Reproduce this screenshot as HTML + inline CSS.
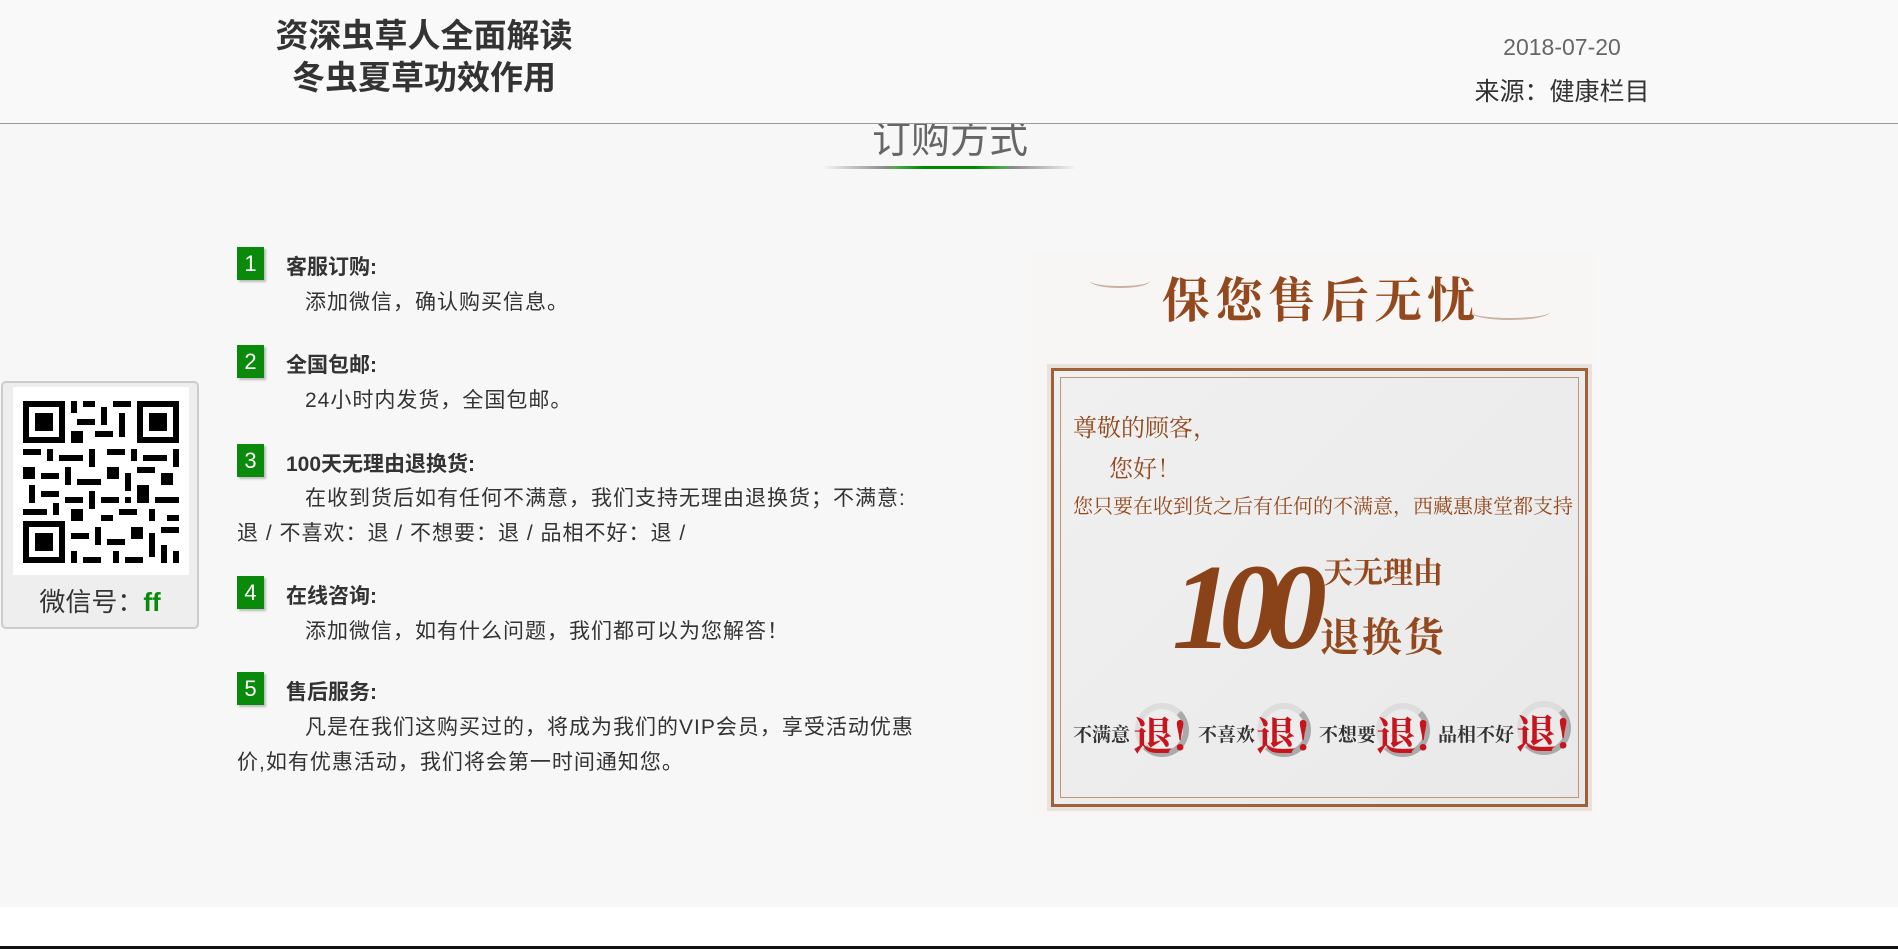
<!DOCTYPE html>
<html><head><meta charset="utf-8"><style>
*{margin:0;padding:0;box-sizing:border-box}
body{width:1898px;height:949px;background:#fff;font-family:"Liberation Sans","Noto Sans CJK SC",sans-serif;position:relative;overflow:hidden;color:#333}
.hdr{position:absolute;left:0;top:0;width:1898px;height:124px;background:#f9f9f9;border-bottom:1px solid #999;z-index:2;overflow:hidden}
.main{position:absolute;left:0;top:124px;width:1898px;height:783px;background:#f7f7f7;overflow:hidden}
.t{position:absolute;left:174px;width:500px;text-align:center;font-weight:bold;font-size:33px;color:#333;line-height:42px}
.abs{position:absolute;white-space:nowrap}
.badge{position:absolute;left:237px;width:27px;height:33px;background:#0a8a0a;color:#fff;font-size:22px;text-align:center;line-height:33px;box-shadow:2px 2px 2px #bbb}
.it{position:absolute;left:286px;font-weight:bold;font-size:21px;color:#333}
.ds{position:absolute;left:237px;width:684px;font-size:21px;letter-spacing:1px;line-height:35px;text-indent:68px;color:#333}
.br{color:#93491d;font-family:"Noto Serif CJK SC","WenQuanYi Zen Hei",serif}
.tui{position:absolute;font-size:40px;color:#c8141c;font-family:"Noto Serif CJK SC",serif;font-weight:bold}
.circ{position:absolute;width:54px;height:54px;border-radius:50%;border:6px solid #aaa;border-left-color:#ddd;border-top-color:#ddd}
.sm{position:absolute;font-size:19px;color:#333;font-family:'Noto Serif CJK SC',serif;font-weight:bold}
</style></head><body>
<div class="hdr">
 <div class="t" style="top:15px">资深虫草人全面解读</div>
 <div class="t" style="top:57px">冬虫夏草功效作用</div>
 <div class="abs" style="left:1462px;width:200px;text-align:center;top:34px;font-size:23px;color:#666">2018-07-20</div>
 <div class="abs" style="left:1462px;width:200px;text-align:center;top:72px;font-size:25px;color:#333">来源：健康栏目</div>
</div>
<div class="main">
 <div class="abs" style="left:800px;width:300px;text-align:center;top:-15px;font-size:39px;color:#666">订购方式</div>
 <div class="abs" style="left:824px;top:42px;width:251px;height:3px;background:linear-gradient(90deg,#f4f4f4,#888 25%,#5a5 28%,#080 40%,#080 60%,#5a5 72%,#888 75%,#f4f4f4)"></div>

 <div class="abs" style="left:1px;top:257px;width:198px;height:248px;background:#eee;border:2px solid #ccc;border-radius:5px"></div>
 <svg class="abs" style="left:13px;top:263px" width="176" height="188" viewBox="0 0 176 188">
  <rect width="176" height="188" fill="#fff"/>
  <g fill="#000">
   <rect x="10" y="14" width="42" height="42"/><rect x="124" y="14" width="42" height="42"/><rect x="10" y="134" width="42" height="42"/>
  </g>
  <g fill="#fff"><rect x="16" y="20" width="30" height="30"/><rect x="130" y="20" width="30" height="30"/><rect x="16" y="140" width="30" height="30"/></g>
  <g fill="#000"><rect x="22" y="26" width="18" height="18"/><rect x="136" y="26" width="18" height="18"/><rect x="22" y="146" width="18" height="18"/>
   <rect x="58" y="14" width="6" height="12"/><rect x="70" y="14" width="12" height="6"/><rect x="88" y="20" width="6" height="18"/><rect x="100" y="14" width="18" height="6"/><rect x="64" y="32" width="18" height="6"/><rect x="106" y="26" width="6" height="24"/><rect x="58" y="44" width="12" height="12"/><rect x="82" y="44" width="18" height="6"/>
   <rect x="10" y="62" width="18" height="6"/><rect x="34" y="62" width="6" height="12"/><rect x="46" y="68" width="24" height="6"/><rect x="76" y="62" width="6" height="18"/><rect x="94" y="62" width="18" height="6"/><rect x="118" y="62" width="6" height="12"/><rect x="130" y="68" width="24" height="6"/><rect x="160" y="62" width="6" height="18"/>
   <rect x="10" y="80" width="12" height="12"/><rect x="28" y="86" width="18" height="6"/><rect x="52" y="80" width="6" height="18"/><rect x="64" y="92" width="24" height="6"/><rect x="94" y="80" width="12" height="12"/><rect x="112" y="86" width="6" height="18"/><rect x="124" y="80" width="18" height="6"/><rect x="148" y="86" width="12" height="12"/>
   <rect x="16" y="98" width="6" height="18"/><rect x="28" y="104" width="18" height="6"/><rect x="52" y="110" width="18" height="6"/><rect x="76" y="104" width="6" height="18"/><rect x="88" y="110" width="18" height="6"/><rect x="112" y="110" width="6" height="6"/><rect x="124" y="98" width="12" height="18"/><rect x="142" y="110" width="24" height="6"/>
   <rect x="10" y="122" width="24" height="6"/><rect x="40" y="116" width="6" height="12"/><rect x="58" y="122" width="12" height="12"/><rect x="88" y="128" width="12" height="6"/><rect x="106" y="122" width="18" height="6"/><rect x="136" y="122" width="6" height="12"/><rect x="154" y="128" width="12" height="6"/>
   <rect x="58" y="146" width="18" height="6"/><rect x="82" y="140" width="6" height="18"/><rect x="94" y="152" width="18" height="6"/><rect x="118" y="140" width="12" height="12"/><rect x="136" y="146" width="6" height="24"/><rect x="148" y="140" width="18" height="6"/>
   <rect x="58" y="164" width="6" height="12"/><rect x="70" y="170" width="18" height="6"/><rect x="100" y="164" width="6" height="12"/><rect x="112" y="170" width="18" height="6"/><rect x="148" y="158" width="6" height="18"/><rect x="160" y="164" width="6" height="12"/>
  </g>
 </svg>
 <div class="abs" style="left:1px;width:198px;text-align:center;top:458px;font-size:26px;color:#333">微信号：<b style="color:#0a8a0a">ff</b></div>

 <div class="badge" style="top:123px">1</div><div class="it" style="top:127px">客服订购:</div>
 <div class="ds" style="top:161px">添加微信，确认购买信息。</div>
 <div class="badge" style="top:221px">2</div><div class="it" style="top:225px">全国包邮:</div>
 <div class="ds" style="top:259px">24小时内发货，全国包邮。</div>
 <div class="badge" style="top:320px">3</div><div class="it" style="top:324px">100天无理由退换货:</div>
 <div class="ds" style="top:357px">在收到货后如有任何不满意，我们支持无理由退换货；不满意:退 / 不喜欢：退 / 不想要：退 / 品相不好：退 /</div>
 <div class="badge" style="top:452px">4</div><div class="it" style="top:456px">在线咨询:</div>
 <div class="ds" style="top:490px">添加微信，如有什么问题，我们都可以为您解答！</div>
 <div class="badge" style="top:548px">5</div><div class="it" style="top:552px">售后服务:</div>
 <div class="ds" style="top:586px">凡是在我们这购买过的，将成为我们的VIP会员，享受活动优惠价,如有优惠活动，我们将会第一时间通知您。</div>

 <div class="abs" style="left:1032px;top:126px;width:563px;height:567px;background:#f8f6f4"></div>
 <div class="abs br" style="left:1162px;top:138px;font-size:48px;letter-spacing:5px;font-weight:bold">保您售后无忧</div>
 <div class="abs" style="left:1090px;top:150px;width:60px;height:14px;border-bottom:2px solid #c9b0a0;border-radius:50%"></div>
 <div class="abs" style="left:1470px;top:180px;width:80px;height:16px;border-bottom:2px solid #c9b0a0;border-radius:50%"></div>
 <div class="abs" style="left:1051px;top:244px;width:537px;height:439px;background:linear-gradient(135deg,#f0f0f0,#e9e9e9);border:3px solid #a0603a;outline:4px solid #e8e2dc"></div>
 <div class="abs" style="left:1060px;top:253px;width:519px;height:421px;border:1px solid #c0967a"></div>
 <div class="abs br" style="left:1073px;top:284px;font-size:24px">尊敬的顾客，</div>
 <div class="abs br" style="left:1109px;top:325px;font-size:24px">您好！</div>
 <div class="abs br" style="left:1073px;top:366px;font-size:20px">您只要在收到货之后有任何的不满意，西藏惠康堂都支持</div>
 <div class="abs" style="left:1172px;top:414px;font-size:122px;font-weight:bold;font-style:italic;color:#8a4218;font-family:'Liberation Serif',serif;letter-spacing:-14px;line-height:140px">100</div>
 <div class="abs br" style="left:1323px;top:424px;font-size:30px;font-weight:bold">天无理由</div>
 <div class="abs br" style="left:1320px;top:482px;font-size:40px;font-weight:bold;letter-spacing:2px">退换货</div>
 <div class="circ" style="left:1135px;top:579px"></div>
 <div class="circ" style="left:1257px;top:579px"></div>
 <div class="circ" style="left:1376px;top:579px"></div>
 <div class="circ" style="left:1517px;top:577px"></div>
 <div class="sm" style="left:1073px;top:596px">不满意</div>
 <div class="tui" style="left:1133px;top:581px">退!</div>
 <div class="sm" style="left:1198px;top:596px">不喜欢</div>
 <div class="tui" style="left:1256px;top:581px">退!</div>
 <div class="sm" style="left:1319px;top:596px">不想要</div>
 <div class="tui" style="left:1376px;top:581px">退!</div>
 <div class="sm" style="left:1438px;top:596px">品相不好</div>
 <div class="tui" style="left:1516px;top:579px">退!</div>
</div>
<div class="abs" style="left:0;top:946px;width:1898px;height:3px;background:#111"></div>
</body></html>
